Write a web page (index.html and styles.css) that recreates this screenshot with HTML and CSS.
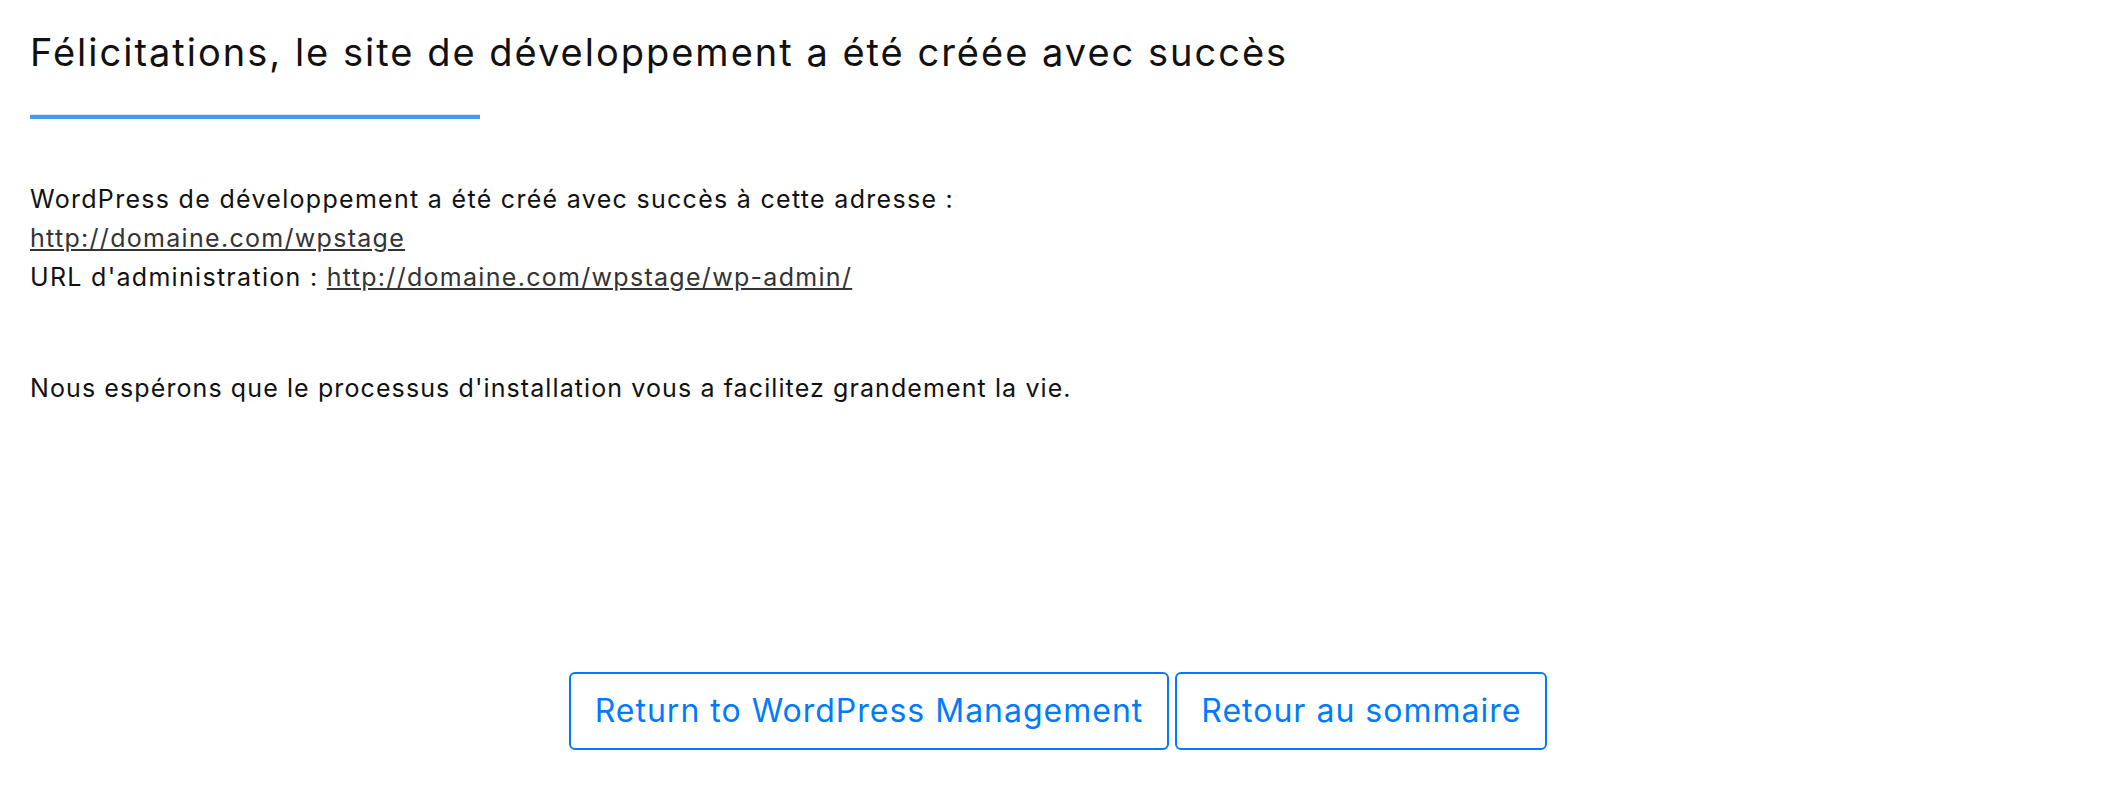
FILE: index.html
```html
<!DOCTYPE html>
<html lang="fr">
<head>
    <meta charset="UTF-8">
    <meta name="viewport" content="width=device-width, initial-scale=1.0">
    <title>Site de développement créé</title>
    <link rel="stylesheet" href="styles.css">
</head>
<body>
    <main class="result">
        <h1 class="result-title">Félicitations, le site de développement a été créée avec succès</h1>
        <div class="result-rule"></div>
        <p class="result-info">
            WordPress de développement a été créé avec succès à cette adresse :<br>
            <a href="#">http://domaine.com/wpstage</a><br>
            URL d'administration : <a href="#">http://domaine.com/wpstage/wp-admin/</a>
        </p>
        <p class="result-note">Nous espérons que le processus d'installation vous a facilitez grandement la vie.</p>
        <div class="result-actions">
            <button class="btn-outline">Return to WordPress Management</button>
            <button class="btn-outline">Retour au sommaire</button>
        </div>
    </main>
</body>
</html>
```

FILE: styles.css
```css
:root {
    --blue: #007bff;
    --rule: #4499f5;
    --text: #111;
}
body {
    margin: 0;
    background-color: white;
    color: var(--text);
    font-family: Inter, "Open Sans", sans-serif;
}
.result {
    padding: 29px 30px;
}
.result-title {
    margin: 0;
    font-size: 38px;
    line-height: 46px;
    font-weight: 400;
    letter-spacing: 2px;
}
.result-rule {
    margin-top: 39px;
    width: 450px;
    height: 4px;
    border-top: 1px solid #e4e4e4;
    background-color: var(--rule);
}
.result-info,
.result-note {
    margin: 0;
    font-size: 25px;
    line-height: 39px;
    letter-spacing: 1.3px;
}
.result-info {
    margin-top: 61px;
}
.result-note {
    margin-top: 72px;
    letter-spacing: 1.1px;
}
.result-info a {
    color: #333;
}
.result-actions {
    margin-top: 264px;
    display: flex;
    justify-content: center;
    gap: 6px;
}
.btn-outline {
    padding: 17px 24px;
    font-family: inherit;
    font-size: 32px;
    line-height: 40px;
    letter-spacing: 1px;
    color: var(--blue);
    background-color: white;
    border: 2px solid var(--blue);
    border-radius: 6px;
    cursor: pointer;
}
```
